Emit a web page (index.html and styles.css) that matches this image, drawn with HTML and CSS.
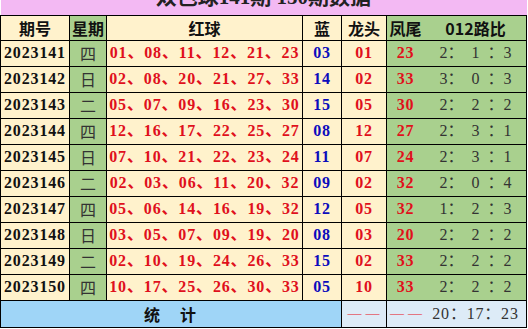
FILE: index.html
```html
<!DOCTYPE html>
<html lang="zh-CN">
<head>
<meta charset="utf-8">
<title>双色球141期 150期数据</title>
<link rel="stylesheet" href="styles.css">
</head>
<body>
<table class="grid">
  <colgroup>
    <col class="c-qh"><col class="c-xq"><col class="c-hq"><col class="c-lan"><col class="c-lt"><col class="c-fw"><col class="c-lb">
  </colgroup>
  <tr class="title"><td colspan="7">双色球141期 150期数据</td></tr>
  <tr class="head">
    <th class="cream">期号</th><th class="green">星期</th><th class="cream">红球</th><th class="cream">蓝</th><th class="cream">龙头</th><th class="green fw">凤尾</th><th class="green lb">012路比</th>
  </tr>
  <tr class="row"><td class="cream qh">2023141</td><td class="green wk">四</td><td class="cream red">01、08、11、12、21、23</td><td class="cream blue">03</td><td class="cream red">01</td><td class="green red fw">23</td><td class="green ratio lb">2：&ensp;1&ensp;：3</td></tr>
  <tr class="row"><td class="cream qh">2023142</td><td class="green wk">日</td><td class="cream red">02、08、20、21、27、33</td><td class="cream blue">14</td><td class="cream red">02</td><td class="green red fw">33</td><td class="green ratio lb">3：&ensp;0&ensp;：3</td></tr>
  <tr class="row"><td class="cream qh">2023143</td><td class="green wk">二</td><td class="cream red">05、07、09、16、23、30</td><td class="cream blue">15</td><td class="cream red">05</td><td class="green red fw">30</td><td class="green ratio lb">2：&ensp;2&ensp;：2</td></tr>
  <tr class="row"><td class="cream qh">2023144</td><td class="green wk">四</td><td class="cream red">12、16、17、22、25、27</td><td class="cream blue">08</td><td class="cream red">12</td><td class="green red fw">27</td><td class="green ratio lb">2：&ensp;3&ensp;：1</td></tr>
  <tr class="row"><td class="cream qh">2023145</td><td class="green wk">日</td><td class="cream red">07、10、21、22、23、24</td><td class="cream blue">11</td><td class="cream red">07</td><td class="green red fw">24</td><td class="green ratio lb">2：&ensp;3&ensp;：1</td></tr>
  <tr class="row"><td class="cream qh">2023146</td><td class="green wk">二</td><td class="cream red">02、03、06、11、20、32</td><td class="cream blue">09</td><td class="cream red">02</td><td class="green red fw">32</td><td class="green ratio lb">2：&ensp;0&ensp;：4</td></tr>
  <tr class="row"><td class="cream qh">2023147</td><td class="green wk">四</td><td class="cream red">05、06、14、16、19、32</td><td class="cream blue">12</td><td class="cream red">05</td><td class="green red fw">32</td><td class="green ratio lb">1：&ensp;2&ensp;：3</td></tr>
  <tr class="row"><td class="cream qh">2023148</td><td class="green wk">日</td><td class="cream red">03、05、07、09、19、20</td><td class="cream blue">08</td><td class="cream red">03</td><td class="green red fw">20</td><td class="green ratio lb">2：&ensp;2&ensp;：2</td></tr>
  <tr class="row"><td class="cream qh">2023149</td><td class="green wk">二</td><td class="cream red">02、10、19、24、26、33</td><td class="cream blue">15</td><td class="cream red">02</td><td class="green red fw">33</td><td class="green ratio lb">2：&ensp;2&ensp;：2</td></tr>
  <tr class="row"><td class="cream qh">2023150</td><td class="green wk">四</td><td class="cream red">10、17、25、26、30、33</td><td class="cream blue">05</td><td class="cream red">10</td><td class="green red fw">33</td><td class="green ratio lb">2：&ensp;2&ensp;：2</td></tr>
  <tr class="foot">
    <td colspan="4" class="sum">统　计</td><td class="pale dash">——</td><td class="pale dash fw">——</td><td class="pale ratio total lb">20：17：23</td>
  </tr>
</table>
</body>
</html>
```

FILE: styles.css
```css
html, body {
  margin: 0;
  padding: 0;
  background: #ffffff;
  overflow: hidden;
}

.grid {
  border-collapse: collapse;
  table-layout: fixed;
  width: 527px;
  margin-top: -15px;
}

.c-qh { width: 69px; }
.c-xq { width: 37px; }
.c-hq { width: 196px; }
.c-lan { width: 39px; }
.c-lt { width: 45px; }
.c-fw { width: 38px; }
.c-lb { width: 102px; }

.grid td, .grid th {
  border: 1px solid #000;
  padding: 0;
  text-align: center;
  vertical-align: middle;
  white-space: nowrap;
  overflow: hidden;
}

.title td {
  height: 30px;
  background: #f3b9f3;
  font-family: "Liberation Serif", "Noto Sans CJK SC", serif;
  font-weight: 700;
  font-size: 21px;
  line-height: 1;
  color: #222;
  padding-bottom: 4px;
  box-sizing: border-box;
  border-top: none;
  border-left: none;
  border-right: none;
}

.head th {
  height: 24px;
  font-family: "Noto Sans CJK SC", sans-serif;
  font-weight: 700;
  font-size: 16px;
  color: #111;
  line-height: 1;
}

.row td {
  height: 25px;
}

.foot td {
  height: 26px;
}

.cream { background: #fff2cc; }
.green { background: #a9d08e; }
.pale { background: #ddebf7; }

.grid .fw { border-right: 1px solid #a9d08e; }
.grid .lb { border-left: 1px solid #a9d08e; }
.foot .fw { border-right-color: #ddebf7; }
.foot .lb { border-left-color: #ddebf7; }

.qh, .red, .blue {
  font-family: "Liberation Serif", "Noto Sans CJK SC", serif;
  font-weight: 700;
  font-size: 16px;
  letter-spacing: 0.85px;
  line-height: 1;
}

.qh { color: #111; }
.red { color: #e0101c; }
.blue { color: #0c0cbc; }

.wk {
  font-family: "Noto Sans CJK SC", sans-serif;
  font-size: 16px;
  color: #333;
  line-height: 1;
}

.ratio {
  font-family: "Liberation Serif", "Noto Sans CJK SC", serif;
  font-size: 16px;
  color: #333;
  line-height: 1;
}

.total {
  letter-spacing: 0.8px;
}

.sum {
  background: #9fd5f7;
  font-family: "Noto Sans CJK SC", sans-serif;
  font-weight: 700;
  font-size: 16px;
  letter-spacing: 2px;
  color: #111;
}

.dash {
  font-family: "Liberation Serif", serif;
  font-size: 14px;
  letter-spacing: 4px;
  color: #e8101c;
  text-indent: 3px;
}
```
